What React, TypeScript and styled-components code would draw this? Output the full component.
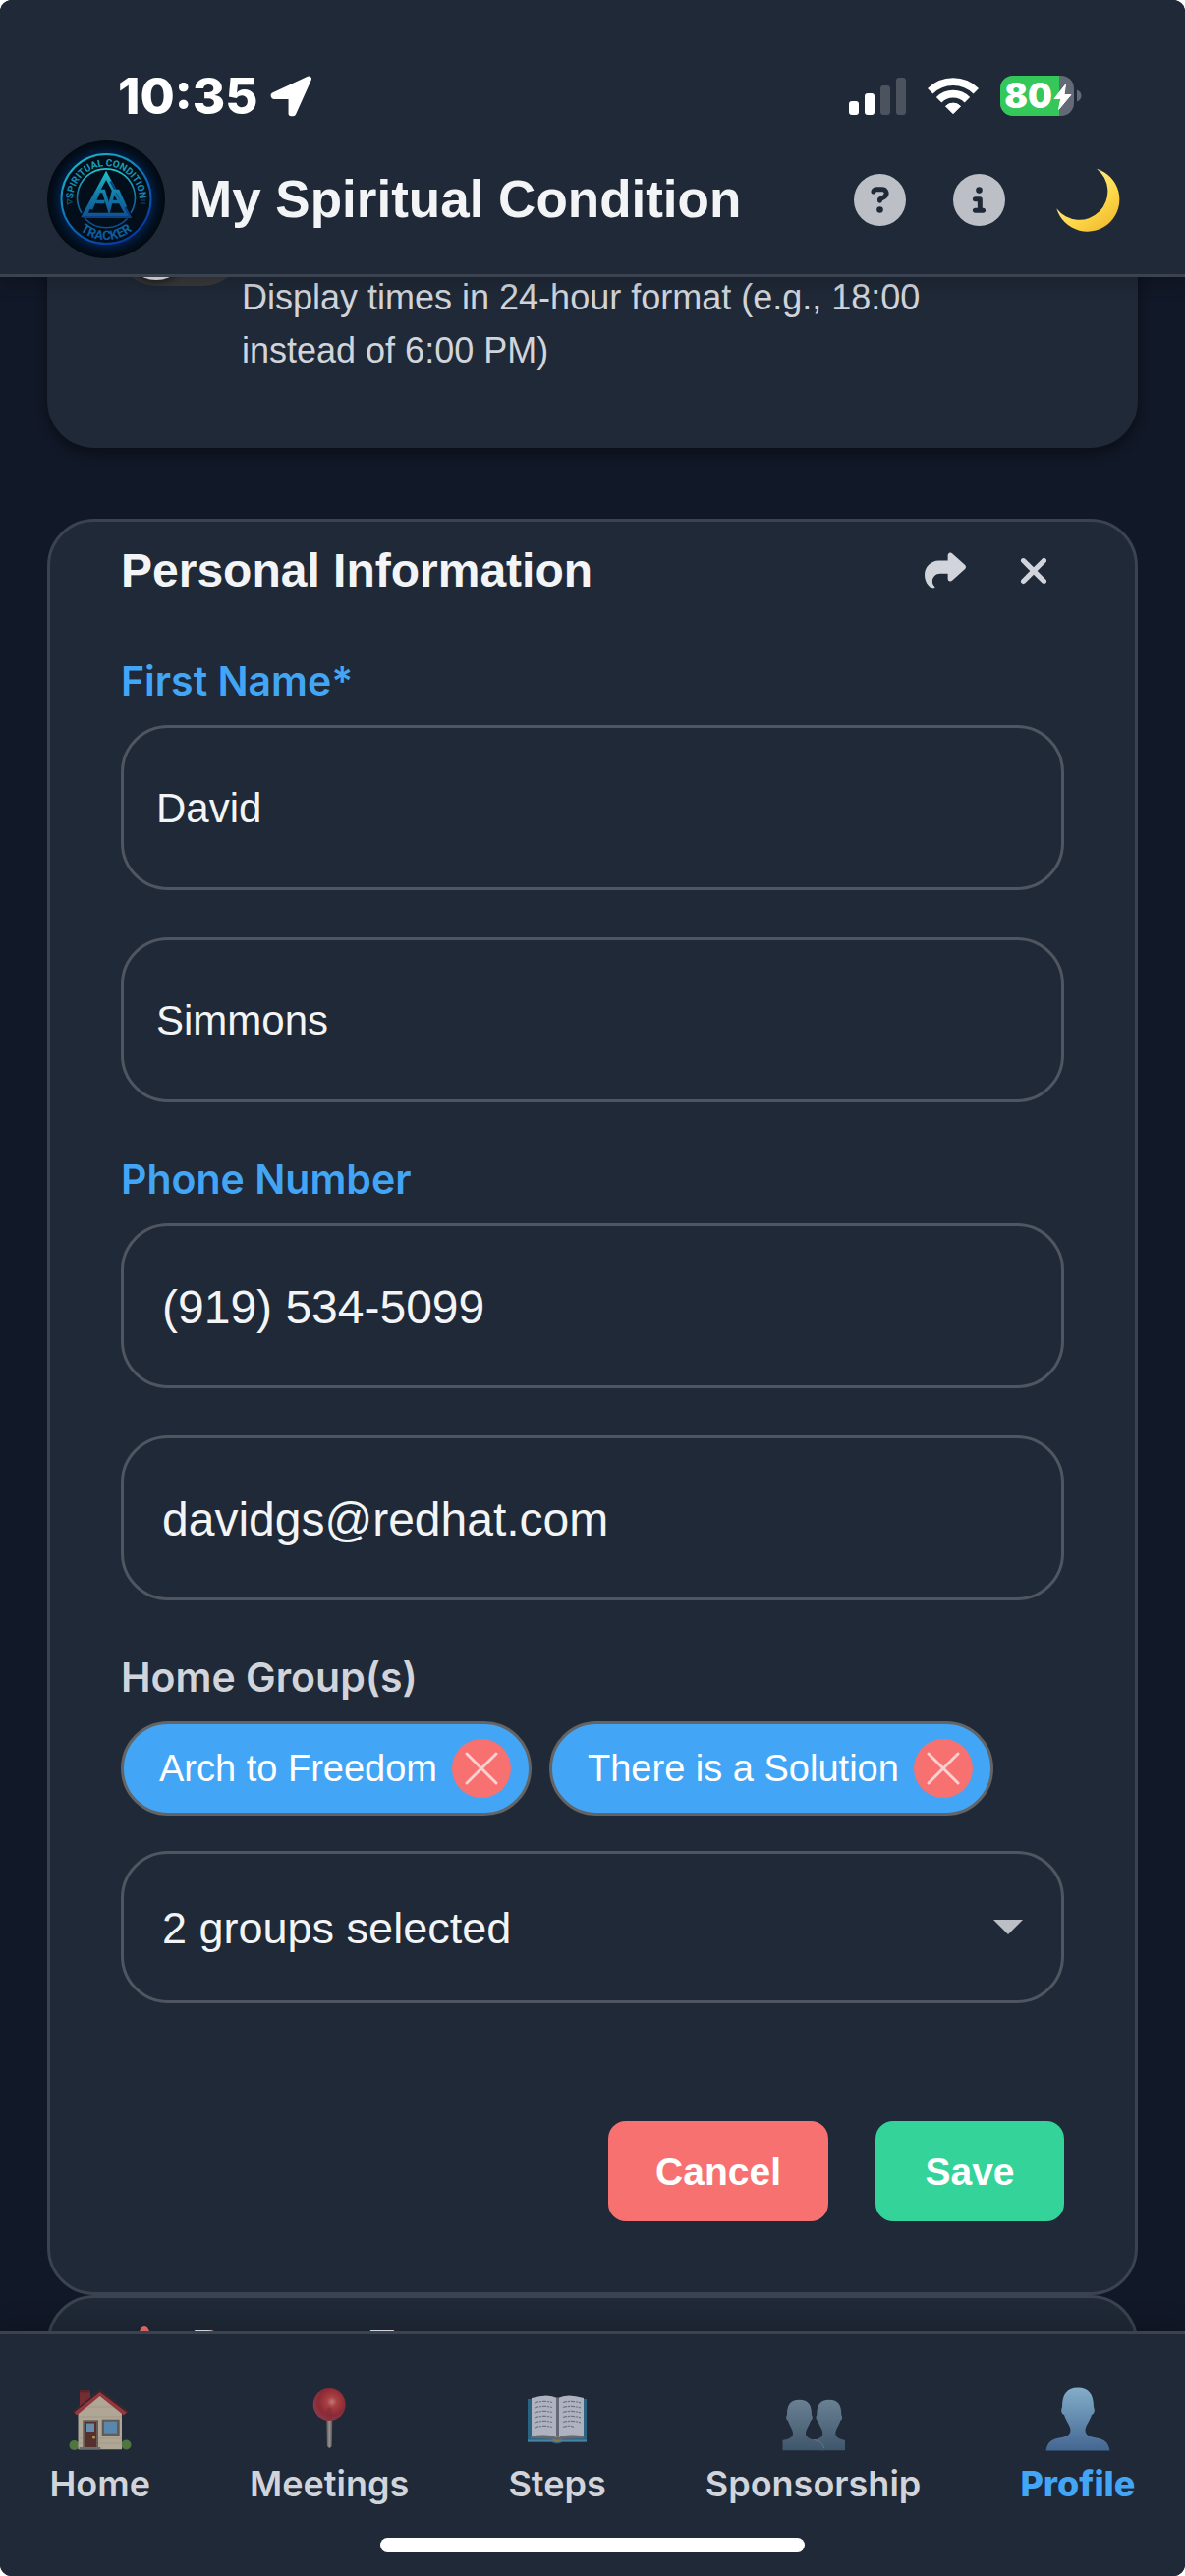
import React, { useState } from 'react';
import styled, { createGlobalStyle } from 'styled-components';
import {
  FaCircleInfo,
  FaCircleQuestion,
  FaShare,
  FaTriangleExclamation,
  FaXmark,
} from 'react-icons/fa6';

const color = {
  page: '#111827',
  surface: '#1f2937',
  line: '#3b4350',
  fieldLine: '#505661',
  text: '#f3f4f6',
  muted: '#d1d5db',
  icon: '#bcbfc5',
  accent: '#42a5f5',
  danger: '#f87171',
  success: '#34d399',
};

const sans = '"Liberation Sans", Arial, sans-serif';
const ui = 'Inter, Roboto, sans-serif';

const GlobalStyle = createGlobalStyle`
  *, *::before, *::after { box-sizing: border-box; }
  body { margin: 0; background: #fff; font-family: ${sans}; }
  button, input, select { font: inherit; color: inherit; margin: 0; }
`;

const Screen = styled.div`
  display: grid;
  grid-template-columns: minmax(0, 1fr);
  grid-template-rows: auto minmax(0, 1fr) auto;
  height: 100vh;
  overflow: hidden;
  border-radius: 12px;
  background: ${color.page};
  color: ${color.text};
`;

/* ---------- header ---------- */

const Header = styled.header`
  z-index: 1;
  background: ${color.surface};
  border-bottom: 3px solid ${color.line};
  box-shadow: 0 6px 18px rgba(0, 0, 0, 0.2);
`;

const StatusBar = styled.div`
  display: flex;
  align-items: center;
  justify-content: space-between;
  height: 143px;
  padding: 53px 105px 0 120px;
  color: #fff;
`;

const StatusGroup = styled.div<{ $gap: number }>`
  display: flex;
  align-items: center;
  gap: ${(p) => p.$gap}px;
`;

const Clock = styled.time`
  font: 800 51px/60px ${ui};
`;

const TitleBar = styled.div`
  display: flex;
  align-items: center;
  gap: 24px;
  padding: 0 63px 16px 48px;
`;

const AppTitle = styled.h1`
  flex: 1;
  margin: 0;
  font-size: 53px;
  line-height: 72px;
  font-weight: 700;
  white-space: nowrap;
`;

const HeaderActions = styled.div`
  display: flex;
  align-items: center;
  gap: 48px;
`;

const IconButton = styled.button<{ $tone?: string }>`
  display: grid;
  place-items: center;
  padding: 0;
  border: 0;
  background: none;
  color: ${(p) => p.$tone ?? color.icon};
  cursor: pointer;
  svg { display: block; }
`;

/* ---------- content ---------- */

const Content = styled.main`
  overflow: hidden;
  padding: 0 48px;
`;

const Sections = styled.div`
  margin-top: -141px;
`;

const SettingsCard = styled.section`
  display: flex;
  align-items: flex-start;
  margin-bottom: 72px;
  padding: 72px;
  border-radius: 48px;
  background: ${color.surface};
  box-shadow: 0 6px 12px rgba(0, 0, 0, 0.4);
`;

const Switch = styled.input`
  appearance: none;
  flex: none;
  display: flex;
  align-items: center;
  width: 126px;
  height: 78px;
  padding: 6px;
  border-radius: 39px;
  background: #39393d;
  cursor: pointer;
  &::before {
    content: '';
    width: 66px;
    height: 66px;
    border-radius: 50%;
    background: #e5e5e5;
    box-shadow: 0 3px 6px rgba(0, 0, 0, 0.4);
  }
  &:checked { background: ${color.success}; justify-content: flex-end; }
`;

const SettingHint = styled.p`
  margin: 0;
  padding-top: 63px;
  max-width: 760px;
  font-size: 36px;
  line-height: 54px;
  color: ${color.muted};
`;

const Card = styled.section`
  padding: 12px 72px 72px;
  border: 3px solid ${color.line};
  border-radius: 48px;
  background: ${color.surface};
`;

const CardHeader = styled.div`
  display: flex;
  align-items: center;
  justify-content: space-between;
  padding-right: 10px;
`;

const CardTitle = styled.h2`
  display: flex;
  align-items: center;
  gap: 24px;
  margin: 0;
  font-size: 48px;
  line-height: 75px;
  font-weight: 700;
`;

const CardActions = styled.div`
  display: flex;
  gap: 48px;
`;

const Form = styled.form`
  display: flex;
  flex-direction: column;
  gap: 48px;
  margin-top: 45px;
`;

const Field = styled.div`
  display: flex;
  flex-direction: column;
  gap: 15px;
`;

const Label = styled.label<{ $tone?: string }>`
  font: 600 41px/60px ${ui};
  color: ${(p) => p.$tone ?? color.accent};
`;

const TextInput = styled.input<{ $large?: boolean }>`
  width: 100%;
  height: 168px;
  padding: 2px ${(p) => (p.$large ? 39 : 33)}px 0;
  border: 3px solid ${color.fieldLine};
  border-radius: 48px;
  outline: 0;
  background: transparent;
  font-size: ${(p) => (p.$large ? 48 : 42)}px;
`;

const Chips = styled.ul`
  display: flex;
  flex-wrap: wrap;
  gap: 18px;
  margin: 0;
  padding: 0;
  list-style: none;
`;

const Chip = styled.li`
  display: flex;
  align-items: center;
  gap: 15px;
  height: 96px;
  padding: 0 18px 0 36px;
  border: 3px solid #636466;
  border-radius: 48px;
  background: ${color.accent};
  color: #fff;
  font-size: 38px;
  line-height: 54px;
`;

const ChipRemove = styled.button`
  display: grid;
  place-items: center;
  width: 60px;
  height: 60px;
  padding: 0;
  border: 0;
  border-radius: 50%;
  background: ${color.danger};
  cursor: pointer;
`;

const SelectBox = styled.div`
  display: grid;
  align-items: center;
  margin-top: 21px;
  > * { grid-area: 1 / 1; }
  > svg { justify-self: end; margin-right: 42px; pointer-events: none; }
`;

const Select = styled.select`
  appearance: none;
  width: 100%;
  height: 155px;
  padding: 2px 39px 0;
  border: 3px solid ${color.fieldLine};
  border-radius: 48px;
  outline: 0;
  background: transparent;
  font-size: 45px;
`;

const FormActions = styled.div`
  display: flex;
  justify-content: flex-end;
  gap: 48px;
  margin-top: 72px;
`;

const ActionButton = styled.button<{ $fill: string }>`
  min-width: 192px;
  height: 102px;
  padding: 2px 48px 0;
  border: 0;
  border-radius: 18px;
  background: ${(p) => p.$fill};
  color: #fff;
  font-size: 39px;
  font-weight: 700;
  cursor: pointer;
`;

/* ---------- bottom navigation ---------- */

const BottomBar = styled.footer`
  z-index: 1;
  padding-bottom: 24px;
  background: ${color.surface};
  border-top: 3px solid ${color.line};
  box-shadow: 0 -6px 24px rgba(0, 0, 0, 0.2);
`;

const Tabs = styled.nav`
  display: flex;
  justify-content: space-around;
  padding: 54px 0 28px;
`;

const Tab = styled.a<{ $active?: boolean }>`
  display: flex;
  flex-direction: column;
  align-items: center;
  gap: 5px;
  font: ${(p) => (p.$active ? 800 : 600)} 36px/54px ${ui};
  color: ${(p) => (p.$active ? color.accent : color.muted)};
  text-decoration: none;
  svg { opacity: ${(p) => (p.$active ? 1 : 0.8)}; }
`;

const HomeIndicator = styled.div`
  width: 432px;
  height: 15px;
  margin: 0 auto;
  border-radius: 8px;
  background: #fff;
`;

/* ---------- drawings ---------- */

const Logo = () => (
  <svg width="120" height="120" viewBox="0 0 120 120" role="img" aria-label="Spiritual Condition Tracker">
    <defs>
      <linearGradient id="ring" x1="0.2" y1="0" x2="0.8" y2="1">
        <stop offset="0" stopColor="#1cb9c9" />
        <stop offset="0.5" stopColor="#0e6cb4" />
        <stop offset="1" stopColor="#0631a0" />
      </linearGradient>
      <linearGradient id="mark" x1="0" y1="30" x2="0" y2="80" gradientUnits="userSpaceOnUse">
        <stop offset="0" stopColor="#20c3cf" />
        <stop offset="0.5" stopColor="#137ba6" />
        <stop offset="1" stopColor="#0d4f93" />
      </linearGradient>
      <linearGradient id="letters" x1="0" y1="15" x2="0" y2="102" gradientUnits="userSpaceOnUse">
        <stop offset="0" stopColor="#1ca7ba" />
        <stop offset="1" stopColor="#0d569e" />
      </linearGradient>
      <radialGradient id="halo">
        <stop offset="0.7" stopColor="#020f1b" />
        <stop offset="0.78" stopColor="#021c40" />
        <stop offset="0.9" stopColor="#020f1e" />
        <stop offset="1" stopColor="#020a12" />
      </radialGradient>
      <path id="arcTop" d="M26.500 64.500a33.800 33.800 0 1 1 67 0" />
      <path id="arcBottom" d="M18.500 59.500a41.500 41.500 0 0 0 83 0" />
    </defs>
    <circle cx="60" cy="60" r="60" fill="url(#halo)" />
    <circle cx="60" cy="59.500" r="45.500" fill="#020f1b" stroke="url(#ring)" strokeWidth="2" />
    <path d="M35 74A29.500 29.500 0 1 1 85 74M38.500 79.500a29.500 29.500 0 0 0 43 0" fill="none" stroke="url(#mark)" strokeWidth="1.600" />
    <g fill="url(#letters)" fontFamily="Roboto, sans-serif" fontWeight="700" textAnchor="middle">
      <text fontSize="10"><textPath href="#arcTop" startOffset="50%">SPIRITUAL CONDITION</textPath></text>
      <text fontSize="13"><textPath href="#arcBottom" startOffset="50%">TRACKER</textPath></text>
    </g>
    <path d="M20.500 65l4.500-2.500-4.500-2.500zM95.500 61h4.500M95.500 64h4.500" fill="none" stroke="#0b4d70" strokeWidth="1.200" />
    <path d="M60 35.500 38 76h44z" fill="none" stroke="url(#mark)" strokeWidth="4.500" />
    <path d="M64.500 41.500 84.500 78H37" fill="none" stroke="#0b3f86" strokeWidth="2" />
    <path d="M44.500 70 52.500 51.500h5L63 69.500 67.500 51.500h4.500L79.500 68M49.500 62.500h9M65.500 62.500h9" fill="none" stroke="url(#mark)" strokeWidth="3.600" />
  </svg>
);

const LocationArrow = () => (
  <svg width="43" height="43" viewBox="0 0 43 43" aria-hidden="true">
    <path
      d="M39.200 3.300 3.300 20l.3 1.200h17.700v17.300h2.200z"
      fill="#fff"
      stroke="#fff"
      strokeWidth="5.500"
      strokeLinejoin="round"
    />
  </svg>
);

const SignalIcon = () => (
  <svg width="58" height="38" viewBox="0 0 58 38" fill="#fff" aria-hidden="true">
    <rect y="24" width="10" height="14" rx="3" />
    <rect x="16" y="16" width="10" height="22" rx="3" />
    <rect x="32" y="8" width="10" height="30" rx="3" opacity="0.2" />
    <rect x="48" width="10" height="38" rx="3" opacity="0.2" />
  </svg>
);

const WifiIcon = () => (
  <svg width="52" height="38" viewBox="0 0 52 38" fill="none" stroke="#fff" aria-hidden="true">
    <path d="M2.700 13.700a33 33 0 0 1 46.600 0" strokeWidth="7.700" />
    <path d="M11.600 22.700a20.300 20.300 0 0 1 28.800 0" strokeWidth="7.700" />
    <path d="M18.500 29.200a10.600 10.600 0 0 1 15 0L26 36.700z" fill="#fff" stroke="#fff" strokeWidth="1" strokeLinejoin="round" />
  </svg>
);

const BatteryIcon = () => (
  <svg width="83" height="42" viewBox="0 0 83 42" role="img" aria-label="Battery 80 percent, charging">
    <clipPath id="cell"><rect width="75" height="41" rx="13" /></clipPath>
    <g clipPath="url(#cell)">
      <rect width="75" height="41" fill="#636a76" />
      <rect width="60" height="41" fill="#34c759" />
    </g>
    <path d="M78 14.500q4.500 2 4.500 6t-4.500 6z" fill="#636a76" />
    <text x="28.500" y="33" fill="#fff" fontFamily="Inter, sans-serif" fontWeight="900" fontSize="35" textAnchor="middle">80</text>
    <path d="M66.500 9 55 23.500h6.500L59.500 34.500 72 19.500h-7z" fill="#fff" stroke="#fff" strokeLinejoin="round" />
  </svg>
);

const MoonIcon = () => (
  <svg width="72" height="72" viewBox="0 0 72 72" aria-hidden="true">
    <defs>
      <linearGradient id="moon" x1="0.3" y1="0.2" x2="0.9" y2="1">
        <stop offset="0" stopColor="#ffe98a" />
        <stop offset="0.5" stopColor="#fdd949" />
        <stop offset="1" stopColor="#efb32c" />
      </linearGradient>
    </defs>
    <path d="M45 4.700A32.700 32.700 0 1 1 4.300 45.300 29 29 0 1 0 45 4.700z" fill="url(#moon)" />
  </svg>
);

const HomeIcon = () => (
  <svg width="66" height="66" viewBox="0 0 66 66" aria-hidden="true">
    <path d="M12 3h11v12L12 23z" fill="#8a2e33" />
    <path d="M12 3h11v2.500H12z" fill="#6b2429" />
    <circle cx="6.500" cy="59" r="5" fill="#5d8a43" />
    <circle cx="59.500" cy="58.500" r="5" fill="#5d8a43" />
    <path d="M10.500 25 32.700 7 55 25v38.300H10.500z" fill="#d3c6ae" />
    <path d="M10.500 30H55M10.500 52H55M10.500 57H55M20 20h26" stroke="#bfb198" strokeWidth="0.800" />
    <path d="M32.700 2.500 5.500 24.500l3.500 4L32.700 9 57 28.500l4-4z" fill="#b23a3f" />
    <path d="M32.700 2.500 5.500 24.500l.8 1L32.700 5 60 25.500l1-1z" fill="#3a2326" />
    <path d="M15.300 33.300H31V61H15.300z" fill="#77675c" />
    <path d="M17.300 35H29v26H17.300z" fill="#63322b" />
    <path d="M19 36.500h8V45h-8z" fill="#77a7cc" />
    <circle cx="26.500" cy="51" r="1.500" fill="#d9b25a" />
    <path d="M34.700 32.700h18v16.600h-18z" fill="#77675c" />
    <path d="M37 34.700h13v12H37z" fill="#67a0cb" />
    <path d="M11.700 61h21.600v2.500H11.700z" fill="#807d7c" />
  </svg>
);

const PinIcon = () => (
  <svg width="66" height="66" viewBox="0 0 66 66" aria-hidden="true">
    <defs>
      <radialGradient id="pin" cx="0.58" cy="0.42" r="0.6">
        <stop offset="0" stopColor="#eb8f8b" />
        <stop offset="0.25" stopColor="#cd4748" />
        <stop offset="0.7" stopColor="#a52b35" />
        <stop offset="1" stopColor="#a83e50" />
      </radialGradient>
      <linearGradient id="needle">
        <stop offset="0" stopColor="#55504f" />
        <stop offset="0.5" stopColor="#b9adab" />
        <stop offset="1" stopColor="#5c5655" />
      </linearGradient>
    </defs>
    <path d="M30 30h6.500l-.8 30q-2.400 3.500-4.800 0z" fill="url(#needle)" />
    <circle cx="33.200" cy="17.500" r="16.500" fill="url(#pin)" />
    <path d="M30.500 32.500V22q2.700-3 5.400 0v10.500" fill="#9b2c37" opacity="0.500" />
  </svg>
);

const BookIcon = () => (
  <svg width="66" height="66" viewBox="0 0 66 66" aria-hidden="true">
    <path d="M3 12h60v43.500H39q-6 4-12 0H3z" fill="#2f7396" />
    <path d="M3 53.500h60v2H3z" fill="#4f9cc0" />
    <path d="M28 53h10l-3 3h-4z" fill="#a98b3c" />
    <path d="M6 49.500 33.300 50 60.500 49.500V52q-22 0-27.200 2Q28 52 6 52z" fill="#77787c" />
    <path d="M7 11q17-5 26 0v40q-9-4-26-1.500zM60 11q-17-5-26 0v40q9-4 26-1.500z" fill="#d3d6e2" />
    <path d="M32 10.500h3V50.500h-3z" fill="#777a86" />
    <path
      d="M10 16q9-3 18-.5M10 21q9-3 18-.5M10 26q9-3 18-.5M10 31q9-3 18-.5M10 36q9-3 18-.5M10 41q9-3 18-.5M39 15.500q9-2.500 18 .5M39 20.500q9-2.500 18 .5M39 25.500q9-2.500 18 .5M39 30.500q9-2.500 18 .5M39 35.500q9-2.500 18 .5M39 40.500q6-2.500 11 0"
      fill="none"
      stroke="#83879a"
      strokeWidth="1.200"
      strokeDasharray="4 0.800 2.500 0.800"
    />
  </svg>
);

const PeopleIcon = () => (
  <svg width="66" height="66" viewBox="0 0 66 66" aria-hidden="true">
    <defs>
      <linearGradient id="people" x1="0" y1="12" x2="0" y2="65" gradientUnits="userSpaceOnUse">
        <stop offset="0" stopColor="#7e98ac" />
        <stop offset="1" stopColor="#466178" />
      </linearGradient>
    </defs>
    <path
      d="M31.500 54C35 53 42.300 52 42.300 47c0-4-4-9-5-13-2-1-2.500-4-1-6 0-10 3-15.300 12.500-15.300S61.300 18 61.300 28c1.500 2 1 5-1 6-1 4-5 9-5 13 0 5 6.700 6 9.700 7v10.300H40z"
      fill="url(#people)"
    />
    <path
      d="M1.500 64.300V54C5 53 12 52 12 47c0-4-4-9-5-13-2-1-2.500-4-1-6 0-10 3-15.300 12.500-15.300S31 18 31 28c1.500 2 1 5-1 6-1 4-5 9-5 13 0 5 7 6 11 7 5 1.500 7 5 7.500 10.300z"
      fill="url(#people)"
    />
    <path d="M33 53.500C40 54.500 43 58 43.500 62" fill="none" stroke="#7593a8" strokeWidth="0.800" />
  </svg>
);

const PersonIcon = () => (
  <svg width="66" height="66" viewBox="0 0 66 66" aria-hidden="true">
    <defs>
      <linearGradient id="person" x1="0" y1="0" x2="0" y2="65" gradientUnits="userSpaceOnUse">
        <stop offset="0" stopColor="#84aeca" />
        <stop offset="1" stopColor="#436691" />
      </linearGradient>
    </defs>
    <path
      d="M.5 64.500C2 55 7 53 14 51.500c7-1 11.500-3 11.500-8 0-4-4-8-6.500-15.500-3-1-3.500-5-2-8C17 7 22 .5 33 .5S49 7 49 20c1.500 3 1 7-2 8-2.500 7.500-6.500 11.500-6.500 15.500 0 5 4.500 7 11.500 8 7 1.500 12 3.500 13.500 13z"
      fill="url(#person)"
    />
  </svg>
);

const tabs = [
  { label: 'Home', Icon: HomeIcon },
  { label: 'Meetings', Icon: PinIcon },
  { label: 'Steps', Icon: BookIcon },
  { label: 'Sponsorship', Icon: PeopleIcon },
  { label: 'Profile', Icon: PersonIcon },
];

export default function App() {
  const [groups, setGroups] = useState(['Arch to Freedom', 'There is a Solution']);

  return (
    <>
      <GlobalStyle />
      <Screen>
        <Header>
          <StatusBar>
            <StatusGroup $gap={12}>
              <Clock>10:35</Clock>
              <LocationArrow />
            </StatusGroup>
            <StatusGroup $gap={22}>
              <SignalIcon />
              <WifiIcon />
              <BatteryIcon />
            </StatusGroup>
          </StatusBar>
          <TitleBar>
            <Logo />
            <AppTitle>My Spiritual Condition</AppTitle>
            <HeaderActions>
              <IconButton aria-label="Help"><FaCircleQuestion size={53} /></IconButton>
              <IconButton aria-label="About"><FaCircleInfo size={53} /></IconButton>
              <IconButton aria-label="Dark mode"><MoonIcon /></IconButton>
            </HeaderActions>
          </TitleBar>
        </Header>

        <Content>
          <Sections>
            <SettingsCard>
              <Switch type="checkbox" id="clock24" aria-labelledby="clock24-hint" />
              <SettingHint id="clock24-hint">
                Display times in 24-hour format (e.g., 18:00 instead of 6:00 PM)
              </SettingHint>
            </SettingsCard>

            <Card>
              <CardHeader>
                <CardTitle>Personal Information</CardTitle>
                <CardActions>
                  <IconButton $tone={color.muted} aria-label="Share"><FaShare size={42} /></IconButton>
                  <IconButton $tone={color.muted} aria-label="Close"><FaXmark size={42} /></IconButton>
                </CardActions>
              </CardHeader>
              <Form onSubmit={(e) => e.preventDefault()}>
                <Field>
                  <Label htmlFor="first">First Name*</Label>
                  <TextInput id="first" defaultValue="David" />
                </Field>
                <TextInput aria-label="Last Name" defaultValue="Simmons" />
                <Field>
                  <Label htmlFor="phone">Phone Number</Label>
                  <TextInput id="phone" type="tel" $large defaultValue="(919) 534-5099" />
                </Field>
                <TextInput aria-label="Email" type="email" $large defaultValue="davidgs@redhat.com" />
                <Field>
                  <Label htmlFor="groups" $tone={color.muted}>Home Group(s)</Label>
                  <Chips>
                    {groups.map((group) => (
                      <Chip key={group}>
                        {group}
                        <ChipRemove
                          type="button"
                          aria-label={`Remove ${group}`}
                          onClick={() => setGroups(groups.filter((g) => g !== group))}
                        >
                          <svg width="34" height="34" viewBox="0 0 34 34" stroke="#fad0d2" strokeWidth="3" strokeLinecap="round">
                            <path d="M2 2l30 30M32 2 2 32" />
                          </svg>
                        </ChipRemove>
                      </Chip>
                    ))}
                  </Chips>
                  <SelectBox>
                    <Select id="groups">
                      <option>{groups.length} groups selected</option>
                    </Select>
                    <svg width="30" height="15" viewBox="0 0 30 15" fill={color.icon} aria-hidden="true">
                      <path d="M0 0h30L15 15z" />
                    </svg>
                  </SelectBox>
                </Field>
                <FormActions>
                  <ActionButton type="button" $fill={color.danger}>Cancel</ActionButton>
                  <ActionButton type="submit" $fill={color.success}>Save</ActionButton>
                </FormActions>
              </Form>
            </Card>

            <Card>
              <CardTitle>
                <FaTriangleExclamation size={48} color={color.danger} aria-hidden="true" />
                Danger Zone
              </CardTitle>
            </Card>
          </Sections>
        </Content>

        <BottomBar>
          <Tabs>
            {tabs.map(({ label, Icon }) => (
              <Tab key={label} href={`#${label.toLowerCase()}`} $active={label === 'Profile'}>
                <Icon />
                {label}
              </Tab>
            ))}
          </Tabs>
          <HomeIndicator />
        </BottomBar>
      </Screen>
    </>
  );
}
